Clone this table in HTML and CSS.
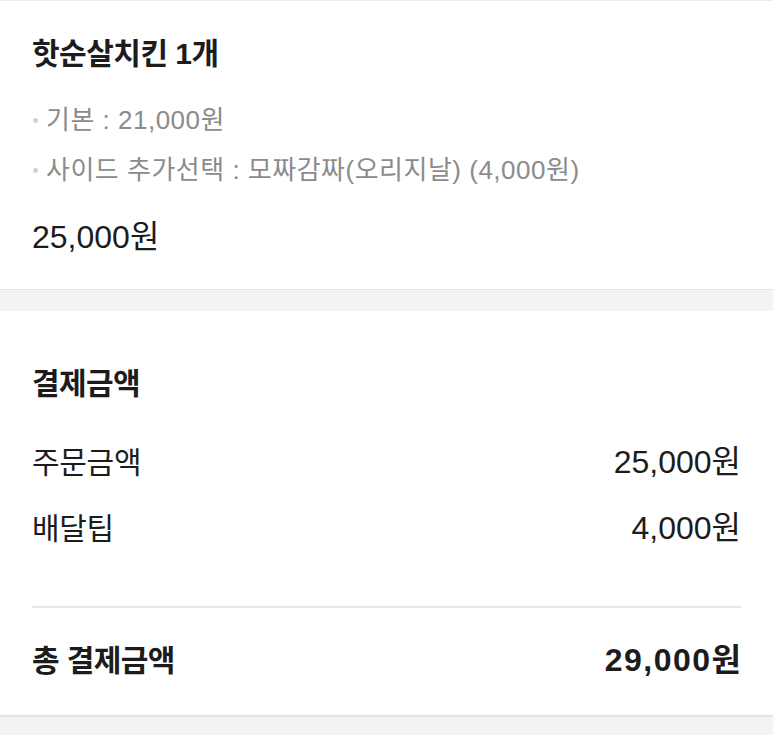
FILE: index.html
```html
<!DOCTYPE html>
<html lang="ko">
<head>
<meta charset="utf-8">
<link rel="stylesheet" href="styles.css">
</head>
<body>
<section class="card menu">
  <h2 class="menu-title">핫순살치킨 1개</h2>
  <ul class="options">
    <li>기본 : 21,000원</li>
    <li>사이드 추가선택 : 모짜감짜(오리지날) (4,000원)</li>
  </ul>
  <div class="menu-price amount">25,000원</div>
</section>
<section class="card pay">
  <h2 class="pay-title">결제금액</h2>
  <div class="row first"><span>주문금액</span><span class="amount">25,000원</span></div>
  <div class="row second"><span>배달팁</span><span class="amount">4,000원</span></div>
  <div class="divider"></div>
  <div class="row total"><span>총 결제금액</span><span class="amount">29,000원</span></div>
</section>
</body>
</html>
```
FILE: styles.css
```css
html, body {
  margin: 0;
  padding: 0;
}
body {
  background: #f2f3f5;
  font-family: "Liberation Sans", "Noto Sans CJK KR", sans-serif;
  color: #1c1c1c;
  width: 773px;
  height: 735px;
  overflow: hidden;
}
.card {
  background: #fff;
  padding: 0 32px;
}
.menu {
  border-top: 1px solid #ececee;
  padding-top: 33px;
  padding-bottom: 32px;
  border-bottom: 1px solid #e3e4e6;
}
.menu-title {
  margin: 0;
  font-size: 30px;
  font-weight: 700;
  line-height: 40px;
  letter-spacing: -0.5px;
}
.options {
  list-style: none;
  margin: 21px 0 0;
  padding: 0;
  color: #8b8b8b;
  font-size: 26px;
  letter-spacing: 0.5px;
}
.options li {
  line-height: 50px;
  display: flex;
  align-items: center;
}
.options li::before {
  content: "";
  width: 5px;
  height: 5px;
  border-radius: 50%;
  background: #d2d2d2;
  margin: 0 8px 0 1px;
  flex: none;
}
.menu-price {
  margin-top: 22px;
  line-height: 40px;
}
.amount {
  font-size: 32px;
  letter-spacing: 0;
}
.pay {
  margin-top: 21px;
  padding-top: 53px;
  padding-bottom: 34px;
  border-bottom: 2px solid #e3e4e6;
}
.pay-title {
  margin: 0;
  font-size: 30px;
  font-weight: 700;
  line-height: 40px;
  letter-spacing: -0.6px;
}
.row {
  display: flex;
  justify-content: space-between;
  align-items: baseline;
  font-size: 30px;
  line-height: 40px;
  letter-spacing: -0.3px;
}
.row.first { margin-top: 38px; }
.row.second { margin-top: 25px; }
.divider {
  height: 2px;
  background: #e8e8e8;
  margin-top: 57px;
}
.row.total {
  margin-top: 32px;
  font-weight: 700;
  letter-spacing: -0.6px;
}
.row.total .amount {
  letter-spacing: 1.5px;
  margin-right: -1.5px;
}
```
